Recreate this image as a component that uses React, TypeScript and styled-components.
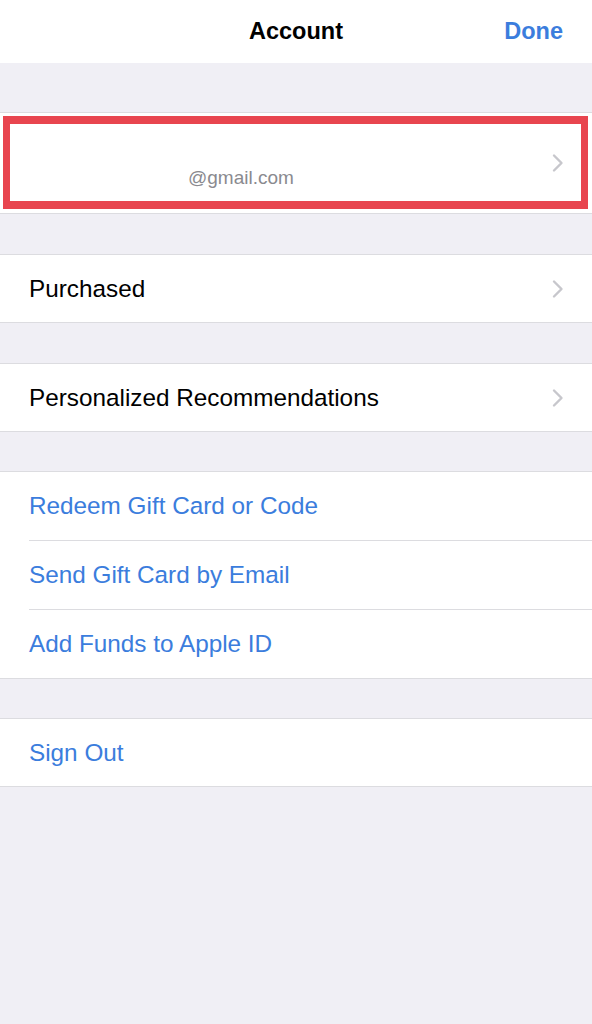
import styled, { createGlobalStyle } from "styled-components";

const GlobalStyle = createGlobalStyle`
  html, body {
    margin: 0;
    padding: 0;
    background: #f0eff5;
    font-family: "Liberation Sans", Arial, sans-serif;
  }
`;

const Chevron = () => (
  <ChevronSvg width="12" height="20" viewBox="0 0 12 20" fill="none">
    <path
      d="M2 2.5L9.5 10L2 17.5"
      stroke="#c7c7cc"
      strokeWidth="2.4"
      strokeLinecap="round"
      strokeLinejoin="round"
    />
  </ChevronSvg>
);

const LinkRows = [
  "Redeem Gift Card or Code",
  "Send Gift Card by Email",
  "Add Funds to Apple ID",
];

export default function App() {
  return (
    <>
      <GlobalStyle />
      <Page>
        <NavBar>
          <span />
          <Title>Account</Title>
          <DoneButton>Done</DoneButton>
        </NavBar>

        <Section $gap={49}>
          <AccountCell>
            <AccountText>
              <NameLine />
              <Email>@gmail.com</Email>
            </AccountText>
            <Chevron />
            <Highlight />
          </AccountCell>
        </Section>

        <Section $gap={40}>
          <Row>
            <Label>Purchased</Label>
            <Chevron />
          </Row>
        </Section>

        <Section $gap={40}>
          <Row>
            <Label>Personalized Recommendations</Label>
            <Chevron />
          </Row>
        </Section>

        <Section $gap={39}>
          {LinkRows.map((text) => (
            <Row key={text} $inset>
              <Label $link>{text}</Label>
            </Row>
          ))}
        </Section>

        <Section $gap={39}>
          <Row>
            <Label $link>Sign Out</Label>
          </Row>
        </Section>
      </Page>
    </>
  );
}

const Page = styled.div`
  width: 592px;
  min-height: 1024px;
  background: #f0eff5;
  display: flex;
  flex-direction: column;
`;

const NavBar = styled.header`
  height: 63px;
  background: #ffffff;
  display: grid;
  grid-template-columns: 1fr auto 1fr;
  align-items: center;
  padding: 0 29px;
  box-sizing: border-box;
`;

const Title = styled.h1`
  margin: 0;
  font-size: 23.5px;
  font-weight: 700;
  color: #000;
`;

const DoneButton = styled.button`
  justify-self: end;
  border: none;
  background: none;
  padding: 0;
  font-family: inherit;
  font-size: 23.5px;
  font-weight: 700;
  color: #3b7ddd;
`;

const Section = styled.section<{ $gap: number }>`
  margin-top: ${(p) => p.$gap}px;
  background: #ffffff;
  border-top: 1px solid #dcdce0;
  border-bottom: 1px solid #dcdce0;
`;

const AccountCell = styled.div`
  position: relative;
  height: 100px;
  display: flex;
  align-items: center;
  justify-content: space-between;
  padding: 0 28px 0 29px;
`;

const AccountText = styled.div`
  display: flex;
  flex-direction: column;
`;

const NameLine = styled.div`
  height: 30px;
`;

const Email = styled.div`
  height: 26px;
  line-height: 26px;
  padding-left: 159px;
  font-size: 19px;
  color: #8a8a8f;
`;

const Highlight = styled.div`
  position: absolute;
  top: 3px;
  left: 3px;
  right: 4px;
  bottom: 4px;
  border: 7px solid #e8454f;
  border-top-width: 8px;
  border-bottom-width: 8px;
  pointer-events: none;
`;

const Row = styled.div<{ $inset?: boolean }>`
  height: ${(p) => (p.$inset ? 68 : 67)}px;
  display: flex;
  align-items: center;
  justify-content: space-between;
  padding: 0 28px 0 29px;

  ${(p) =>
    p.$inset &&
    `
    & + & {
      border-top: 1px solid #dcdce0;
      margin-left: 29px;
      padding-left: 0;
    }
  `}
`;

const Label = styled.span<{ $link?: boolean }>`
  font-size: 24.3px;
  color: ${(p) => (p.$link ? "#3b7ddd" : "#000")};
`;

const ChevronSvg = styled.svg`
  display: block;
  flex-shrink: 0;
`;
